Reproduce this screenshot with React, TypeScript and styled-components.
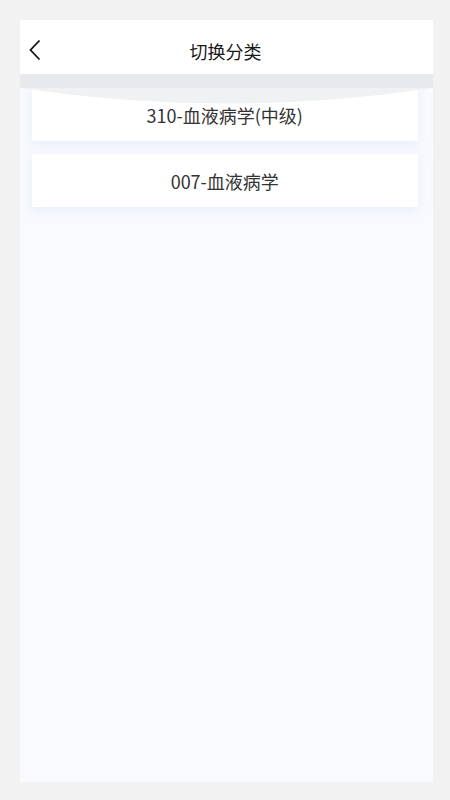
import React from "react";
import styled, { createGlobalStyle } from "styled-components";

const Global = createGlobalStyle`
  html, body { margin: 0; padding: 0; background: #f2f2f2; }
  body { font-family: "Noto Sans CJK SC", "Noto Sans", sans-serif; }
`;

const Page = styled.div`
  box-sizing: border-box;
  width: 450px;
  height: 800px;
  padding: 20px 17px 18px 20px;
  display: flex;
`;

const Frame = styled.div`
  width: 413px;
  display: flex;
  flex-direction: column;
  background: #f8faff;
`;

const Header = styled.div`
  position: relative;
  box-sizing: border-box;
  height: 54px;
  padding-top: 7px;
  background: #ffffff;
  display: flex;
  align-items: center;
  justify-content: center;
`;

const BackButton = styled.button`
  position: absolute;
  left: 3px;
  top: 18px;
  width: 24px;
  height: 24px;
  padding: 0;
  border: 0;
  background: transparent;
  display: flex;
  align-items: center;
  justify-content: center;
`;

const Title = styled.div`
  font-size: 18px;
  color: #1a1a1a;
  line-height: 24px;
  margin-left: -2px;
`;

const Body = styled.div`
  position: relative;
  flex: 1;
`;

const Curve = styled.svg`
  position: absolute;
  left: 0;
  top: 0;
  width: 100%;
  height: 31px;
  pointer-events: none;
`;

const List = styled.div`
  padding: 14px 15.5px 0 12px;
  display: flex;
  flex-direction: column;
  gap: 13.5px;
`;

const Card = styled.div`
  height: 52.5px;
  background: #ffffff;
  box-shadow: 0 3px 10px rgba(215, 226, 246, 0.5);
  display: flex;
  align-items: center;
  justify-content: center;
  padding-top: 2px;
  box-sizing: border-box;
  font-size: 18px;
  color: #333333;
`;

const items = ["310-血液病学(中级)", "007-血液病学"];

export default function App() {
  return (
    <>
      <Global />
      <Page>
        <Frame>
          <Header>
            <BackButton aria-label="back">
              <svg width="14" height="22" viewBox="0 0 14 22">
                <path d="M11.5 1.5 L2.5 11 L11.5 20.5" fill="none" stroke="#111" strokeWidth="1.8" strokeLinejoin="miter" />
              </svg>
            </BackButton>
            <Title>切换分类</Title>
          </Header>
          <Body>
            <List>
              {items.map((t) => (
                <Card key={t}>{t}</Card>
              ))}
            </List>
            <Curve viewBox="0 0 413 31" preserveAspectRatio="none">
              <path d="M0 14 Q206.5 45 413 14 L413 0 L0 0 Z" fill="#f0f1f3" />
              <rect x="0" y="0" width="413" height="14" fill="#e8e9ed" />
            </Curve>
          </Body>
        </Frame>
      </Page>
    </>
  );
}
